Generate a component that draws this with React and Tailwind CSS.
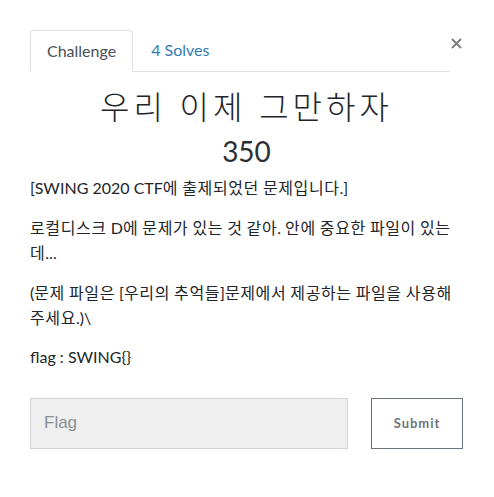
import React from "react";

const font = { fontFamily: "Lato, 'Noto Sans CJK KR', sans-serif" };

// wraps runs of hangul so they get a touch of extra spacing
function K({ children }) {
  return children.split(/([가-힣]+)/).map((part, i) =>
    /[가-힣]/.test(part) ? (
      <span key={i} className="tracking-[0.6px]">
        {part}
      </span>
    ) : (
      part
    )
  );
}

export default function App() {
  return (
    <div
      className="w-[494px] h-[497px] bg-white pl-[30px] pr-[31px] pt-[30px] text-[#212529]"
      style={font}
    >
      {/* header tabs */}
      <div className="flex items-start">
        <ul className="flex w-[420px] border-b border-[#dee2e6]">
          <li className="-mb-px">
            <span className="block px-4 py-2 text-[16px] leading-6 text-[#495057] border border-[#dee2e6] border-b-white rounded-t bg-white">
              Challenge
            </span>
          </li>
          <li>
            <span className="block px-[18px] py-2 text-[16px] leading-6 text-[#337ab7]">
              4 Solves
            </span>
          </li>
        </ul>
        <button className="ml-auto mr-[1px] mt-[8px]">
          <svg width="11" height="11" viewBox="0 0 11 11">
            <path d="M1 1L10 10M10 1L1 10" stroke="#7a7a7a" strokeWidth="1.8" />
          </svg>
        </button>
      </div>

      <h3 className="mt-4 text-center text-[32px] leading-[1.2] font-light tracking-[4px]">
        우리 이제 그만하자
      </h3>
      <h4 className="mt-[9px] text-center text-[28px] leading-[1.2] text-[#2b2f33]">350</h4>

      <div className="mt-[6px] text-[16px] leading-[25px] text-[#212529]">
        <p className="mb-[15px]">
          <K>[SWING 2020 CTF에 출제되었던 문제입니다.]</K>
        </p>
        <p className="mb-[15px]">
          <K>로컬디스크 D에 문제가 있는 것 같아. 안에 중요한 파일이 있는데...</K>
        </p>
        <p className="mb-[15px]">
          <K>(문제 파일은 [우리의 추억들]문제에서 제공하는 파일을 사용해 주세요.)\</K>
        </p>
        <p className="leading-6">flag : SWING{"{}"}</p>
      </div>

      <div className="mt-[29px] flex items-start">
        <input
          placeholder="Flag"
          className="w-[318px] h-[51px] bg-[#efefef] border border-[#ced4da] px-[13px] text-[17px] placeholder:text-[#8a8f94] outline-none"
          style={{ fontFamily: "'Liberation Sans', Arial, sans-serif" }}
        />
        <button className="ml-auto w-[92px] h-[51px] border border-[#6c757d] text-[13px] font-bold tracking-[1px] text-[#6c757d]">
          Submit
        </button>
      </div>
    </div>
  );
}
